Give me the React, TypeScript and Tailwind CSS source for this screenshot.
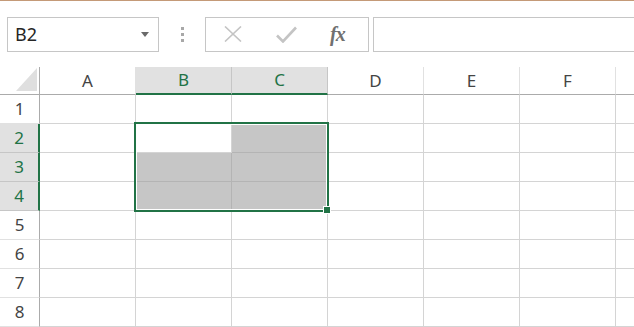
import React from "react";

const cols = ["A", "B", "C", "D", "E", "F", "G"];
const rows = [1, 2, 3, 4, 5, 6, 7, 8];

// cells shaded by the range selection (the active cell B2 stays white)
const shaded = (col: string, row: number) =>
  (col === "B" && (row === 3 || row === 4)) || (col === "C" && row >= 2 && row <= 4);

const selCol = (col: string) => col === "B" || col === "C";
const selRow = (row: number) => row >= 2 && row <= 4;

const Toolbar = () => (
  <div className="flex items-center pl-[7px] pt-[15px] h-[51px]">
    {/* Name box */}
    <div className="w-[152px] h-[35px] border border-[#c6c6c6] flex items-center justify-between pl-[7px] pr-[9px]">
      <span className="text-[18px] text-[#262626] leading-none">B2</span>
      <svg width="8" height="5" viewBox="0 0 8 5">
        <path d="M0 0h8L4 5z" fill="#6a6a6a" />
      </svg>
    </div>

    {/* grip */}
    <div className="w-[46px] flex flex-col items-center gap-[3px]">
      <div className="w-[3px] h-[3px] bg-[#a8a8a8]" />
      <div className="w-[3px] h-[3px] bg-[#a8a8a8]" />
      <div className="w-[3px] h-[3px] bg-[#a8a8a8]" />
    </div>

    {/* cancel / enter / function */}
    <div className="w-[164px] h-[35px] border border-[#c6c6c6] flex items-center">
      <svg className="ml-[18px]" width="18" height="16" viewBox="0 0 18 16">
        <path d="M1 0.5L17 15.5M17 0.5L1 15.5" stroke="#c4c4c4" strokeWidth="1.6" />
      </svg>
      <svg className="ml-[34px]" width="21" height="17" viewBox="0 0 21 17">
        <path d="M1 9.5L7 15.5L20 1.5" stroke="#c4c4c4" strokeWidth="2.6" fill="none" />
      </svg>
      <span className="ml-[33px] font-['Liberation_Serif',serif] italic font-bold text-[20px] text-[#707070] leading-none tracking-[-1px]">
        fx
      </span>
    </div>

    {/* formula bar */}
    <div className="ml-[4px] flex-1 h-[35px] border border-[#c6c6c6] border-r-0" />
  </div>
);

export default function App() {
  return (
    <div className="w-[634px] h-[327px] bg-white overflow-hidden font-['Noto_Sans','Open_Sans',sans-serif]">
      <div className="h-px bg-[#c49a78]" />
      <Toolbar />

      <div className="relative mt-[15px]">
        <div className="grid grid-cols-[40px_repeat(7,96px)]">
          {/* header row */}
          <div className="h-[28px] border-b border-r border-[#ababab] relative">
            <svg className="absolute left-[16px] top-[1px]" width="21" height="23" viewBox="0 0 21 23">
              <path d="M21 0V23H0z" fill="#dfdfdf" />
            </svg>
          </div>
          {cols.map((c) =>
            selCol(c) ? (
              <div
                key={c}
                className="h-[28px] bg-[#e1e1e1] border-r border-[#c6c6c6] border-b-2 border-b-[#217346] flex items-center justify-center text-[17px] text-[#217346]"
              >
                {c}
              </div>
            ) : (
              <div
                key={c}
                className="h-[28px] border-r border-[#e1e1e1] border-b border-b-[#ababab] flex items-center justify-center text-[17px] text-[#444444]"
              >
                {/* column G lies past the window edge, its letter is not in view */}
                {c === "G" ? "" : c}
              </div>
            ),
          )}

          {rows.map((r) => (
            <React.Fragment key={r}>
              {selRow(r) ? (
                <div className="h-[29px] bg-[#e1e1e1] border-b border-[#c6c6c6] border-r-2 border-r-[#217346] flex items-center justify-center text-[17px] text-[#217346]">
                  {r}
                </div>
              ) : (
                <div className="h-[29px] border-b border-[#e1e1e1] border-r border-r-[#ababab] flex items-center justify-center text-[17px] text-[#444444]">
                  {r}
                </div>
              )}
              {cols.map((c) => (
                <div
                  key={c}
                  className={
                    shaded(c, r)
                      ? "h-[29px] bg-[#c6c6c6] border-r border-b border-[#b4b4b4]"
                      : "h-[29px] border-r border-b border-[#d4d4d4]"
                  }
                />
              ))}
            </React.Fragment>
          ))}
        </div>

        {/* selection range B2:C4 */}
        <div className="absolute left-[134px] top-[55px] w-[195px] h-[90px] border-2 border-[#217346]">
          <div className="absolute inset-0 border border-white" />
        </div>
        <div className="absolute left-[323px] top-[139px] w-[8px] h-[8px] bg-[#217346] border border-white" />
      </div>
    </div>
  );
}
